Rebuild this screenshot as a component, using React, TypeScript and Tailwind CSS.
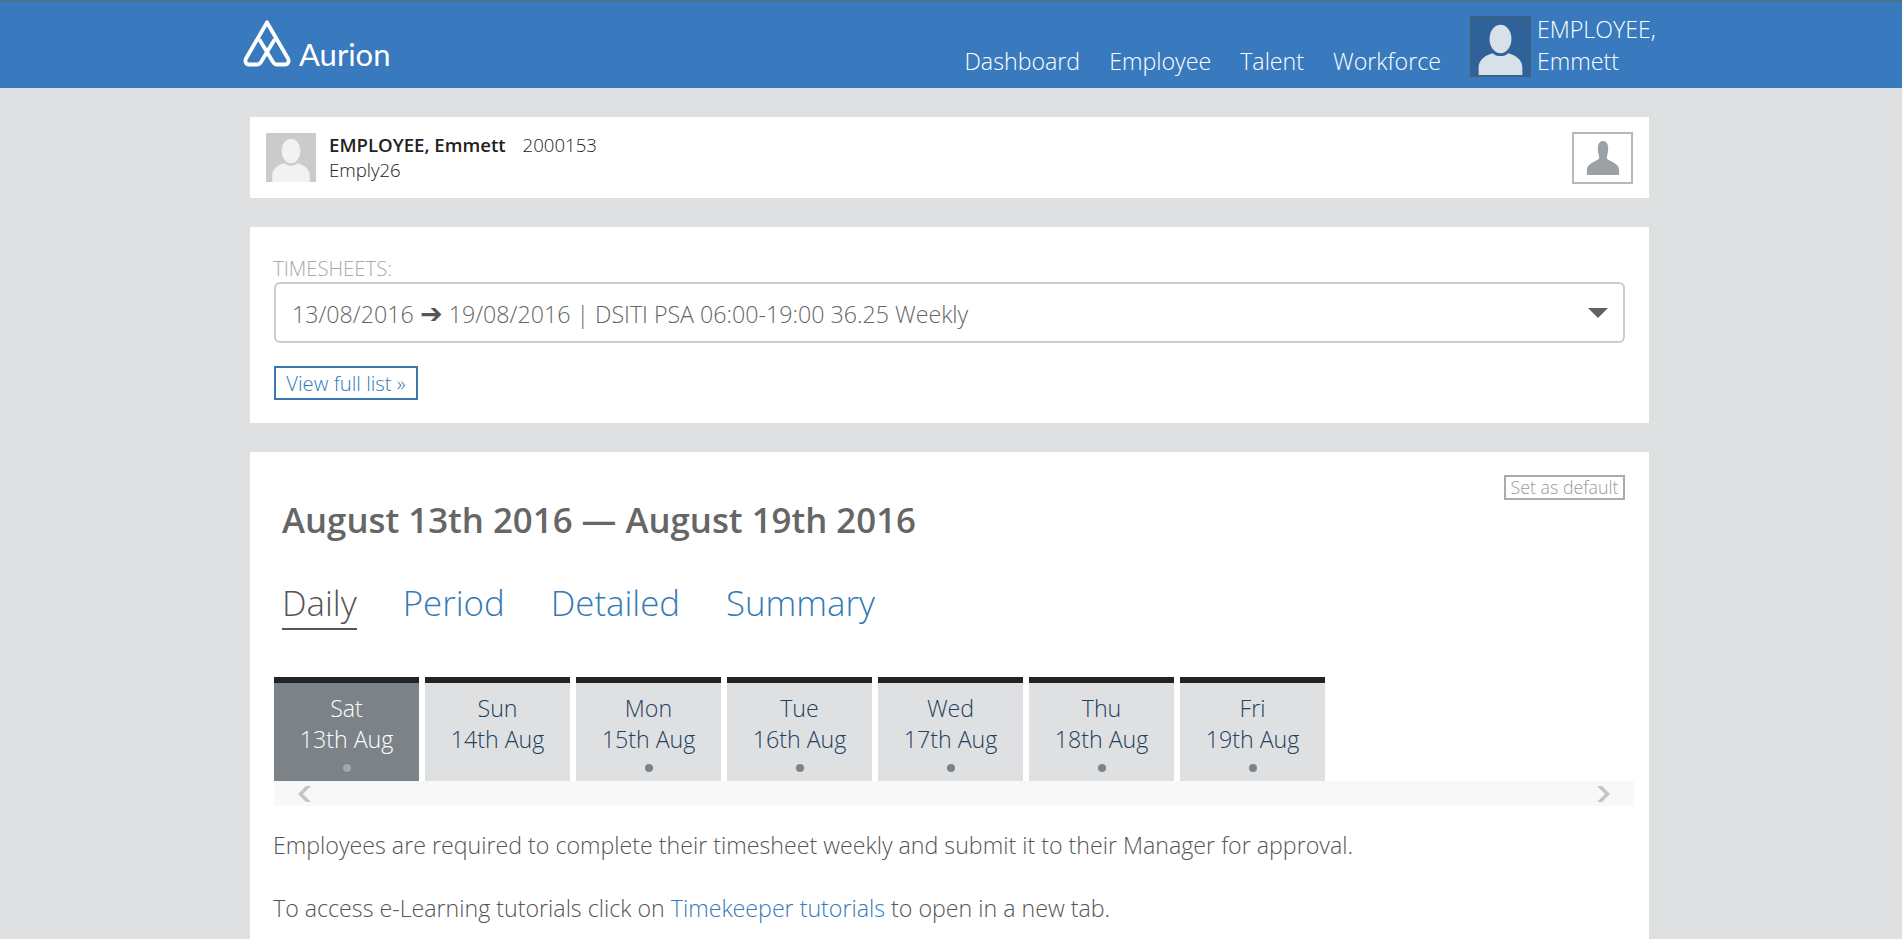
import React from "react";

const NAV = ["Dashboard", "Employee", "Talent", "Workforce"];
const TABS = ["Daily", "Period", "Detailed", "Summary"];
const DAYS = [
  { day: "Sat", date: "13th Aug", selected: true },
  { day: "Sun", date: "14th Aug", noDot: true },
  { day: "Mon", date: "15th Aug" },
  { day: "Tue", date: "16th Aug" },
  { day: "Wed", date: "17th Aug" },
  { day: "Thu", date: "18th Aug" },
  { day: "Fri", date: "19th Aug" },
];

function Silhouette({ head, body }: { head: string; body: string }) {
  return (
    <svg viewBox="0 0 60 60" className="block h-full w-full">
      <ellipse cx="30" cy="22" rx="11.5" ry="15" fill={head} />
      <path d="M7 60V52C7 43 15 39 22 37C25 41 35 41 38 37C45 39 53 43 53 52V60Z" fill={body} />
    </svg>
  );
}

function Logo() {
  return (
    <svg viewBox="0 0 48 46" className="h-[47px] w-[48px]" fill="none" stroke="#fff" strokeWidth="3.8" strokeLinejoin="round" strokeLinecap="round">
      <path d="M24 2L45 38C46.5 41 45 44 42 44H34C32 44 31 43 30 41.5L17 20" />
      <path d="M24 2L3 38C1.5 41 3 44 6 44H14C16 44 17 43 18 41.5L31 20" />
    </svg>
  );
}

export default function App() {
  return (
    <div className="h-[939px] overflow-hidden bg-[#dee0e2] font-['Open_Sans',sans-serif] font-light text-[#555]">
      <header className="flex h-[88px] items-start border-t-2 border-[#4a7192] bg-[#387abd] text-white">
        <div className="ml-[243px] mt-[18px] flex items-end">
          <Logo />
          <span className="ml-[8px] font-['Lato',sans-serif] text-[31px] leading-[26px] font-normal">Aurion</span>
        </div>
        <nav className="ml-[574px] mt-[43px] flex gap-[29px] text-[23.2px] leading-[32px]">
          {NAV.map((n) => (
            <span key={n}>{n}</span>
          ))}
        </nav>
        <div className="ml-[29px] mt-[14px] h-[61px] w-[61px] overflow-hidden border-2 border-[#3b6285] bg-[#2f6298]">
          <Silhouette head="#d8e1ea" body="#d8e1ea" />
        </div>
        <div className="ml-[6px] mt-[11px] text-[23.2px] leading-[32px]">
          EMPLOYEE,
          <br />
          Emmett
        </div>
      </header>

      <main className="ml-[250px] w-[1399px]">
        <section className="mt-[29px] flex h-[81px] items-center bg-white pl-[16px] pr-[16px]">
          <div className="h-[49px] w-[50px] overflow-hidden bg-[#cbcbcb]">
            <Silhouette head="#f2f2f2" body="#f2f2f2" />
          </div>
          <div className="ml-[13px] -mt-[2px] text-[18.6px] leading-[25px] text-[#222]">
            <div>
              <span className="font-semibold">EMPLOYEE, Emmett</span>
              <span className="ml-[17px]">2000153</span>
            </div>
            <div>Emply26</div>
          </div>
          <div className="ml-auto flex h-[52px] w-[61px] items-center justify-center border-2 border-[#b4b8bb] bg-white">
            <svg viewBox="0 0 34 36" className="h-[34px] w-[34px]">
              <path d="M17 0C20.5 0 22.5 3 22.5 8C22.5 13 21 16 21 18C21 21 34 23 34 30V36H0V30C0 23 13 21 13 18C13 16 11.5 13 11.5 8C11.5 3 13.5 0 17 0Z" fill="#9ca1a5" />
            </svg>
          </div>
        </section>

        <section className="mt-[29px] h-[196px] bg-white pl-[24px] pr-[24px] pt-[28px]">
          <div className="-ml-[1px] text-[20.3px] leading-[27px] text-[#aaa]">TIMESHEETS:</div>
          <div className="flex h-[61px] w-[1351px] items-center rounded-[6px] border-2 border-[#ccc] pl-[16px] pr-[15px] pt-[3px] text-[23.2px] text-[#666]">
            <span>
              13/08/2016 <span className="font-['DejaVu_Sans',sans-serif] text-[27px] leading-none text-[#555]">➔</span> 19/08/2016 | DSITI PSA 06:00-19:00 36.25 Weekly
            </span>
            <span className="ml-auto -mt-[3px] h-0 w-0 border-x-[10px] border-t-[10px] border-x-transparent border-t-[#5c6266]" />
          </div>
          <button className="mt-[23px] block h-[34px] w-[144px] border-2 border-[#3a77b0] text-center text-[20.3px] leading-[28px] font-light text-[#337ab7]">
            View full list »
          </button>
        </section>

        <section className="mt-[29px] h-[500px] bg-white pl-[24px] pr-[15px] pt-[23px]">
          <div className="flex justify-end pr-[9px]">
            <span className="h-[25px] w-[121px] border-2 border-[#a8acaf] text-center text-[17.8px] leading-[21px] text-[#999]">Set as default</span>
          </div>
          <h1 className="ml-[8px] -mt-[3px] text-[34.8px] leading-[46px] font-semibold text-[#666]">August 13th 2016 — August 19th 2016</h1>
          <div className="ml-[8px] mt-[35px] flex gap-[46px] text-[34.8px] leading-[50px]">
            {TABS.map((t, i) => (
              <span key={t} className={i === 0 ? "border-b-2 border-[#555] text-[#555]" : "text-[#337ab7]"}>
                {t}
              </span>
            ))}
          </div>
          <div className="mt-[47px] flex gap-[6px]">
            {DAYS.map((d) => (
              <div
                key={d.day}
                className={
                  d.selected
                    ? "h-[104px] w-[145px] border-t-[6px] border-[#212325] bg-[#7b8288] pt-[10px] text-center text-[23.2px] leading-[31px] text-white"
                    : "h-[104px] w-[145px] border-t-[6px] border-[#212325] bg-[#dee0e2] pt-[10px] text-center text-[23.2px] leading-[31px] text-[#23405e]"
                }
              >
                {d.day}
                <br />
                {d.date}
                {!d.noDot && (
                  <div className={d.selected ? "mx-auto mt-[9px] h-[8px] w-[8px] rounded-full bg-[#a3a8ac]" : "mx-auto mt-[9px] h-[8px] w-[8px] rounded-full bg-[#7b8288]"} />
                )}
              </div>
            ))}
          </div>
          <div className="flex h-[25px] items-center justify-between bg-[#f8f8f8] pl-[24px] pr-[24px]">
            <svg viewBox="0 0 14 16" className="h-[16px] w-[14px]">
              <path d="M13 0L5 8L13 16H8L0 8L8 0Z" fill="#c4c4c4" />
            </svg>
            <svg viewBox="0 0 14 16" className="h-[16px] w-[14px]">
              <path d="M1 0L9 8L1 16H6L14 8L6 0Z" fill="#c4c4c4" />
            </svg>
          </div>
          <p className="-ml-[1px] mt-[23px] text-[23.2px] leading-[32px] text-[#555]">
            Employees are required to complete their timesheet weekly and submit it to their Manager for approval.
          </p>
          <p className="-ml-[1px] mt-[31px] text-[23.2px] leading-[32px] text-[#555]">
            To access e-Learning tutorials click on <span className="text-[#337ab7]">Timekeeper tutorials</span> to open in a new tab.
          </p>
        </section>
      </main>
    </div>
  );
}
